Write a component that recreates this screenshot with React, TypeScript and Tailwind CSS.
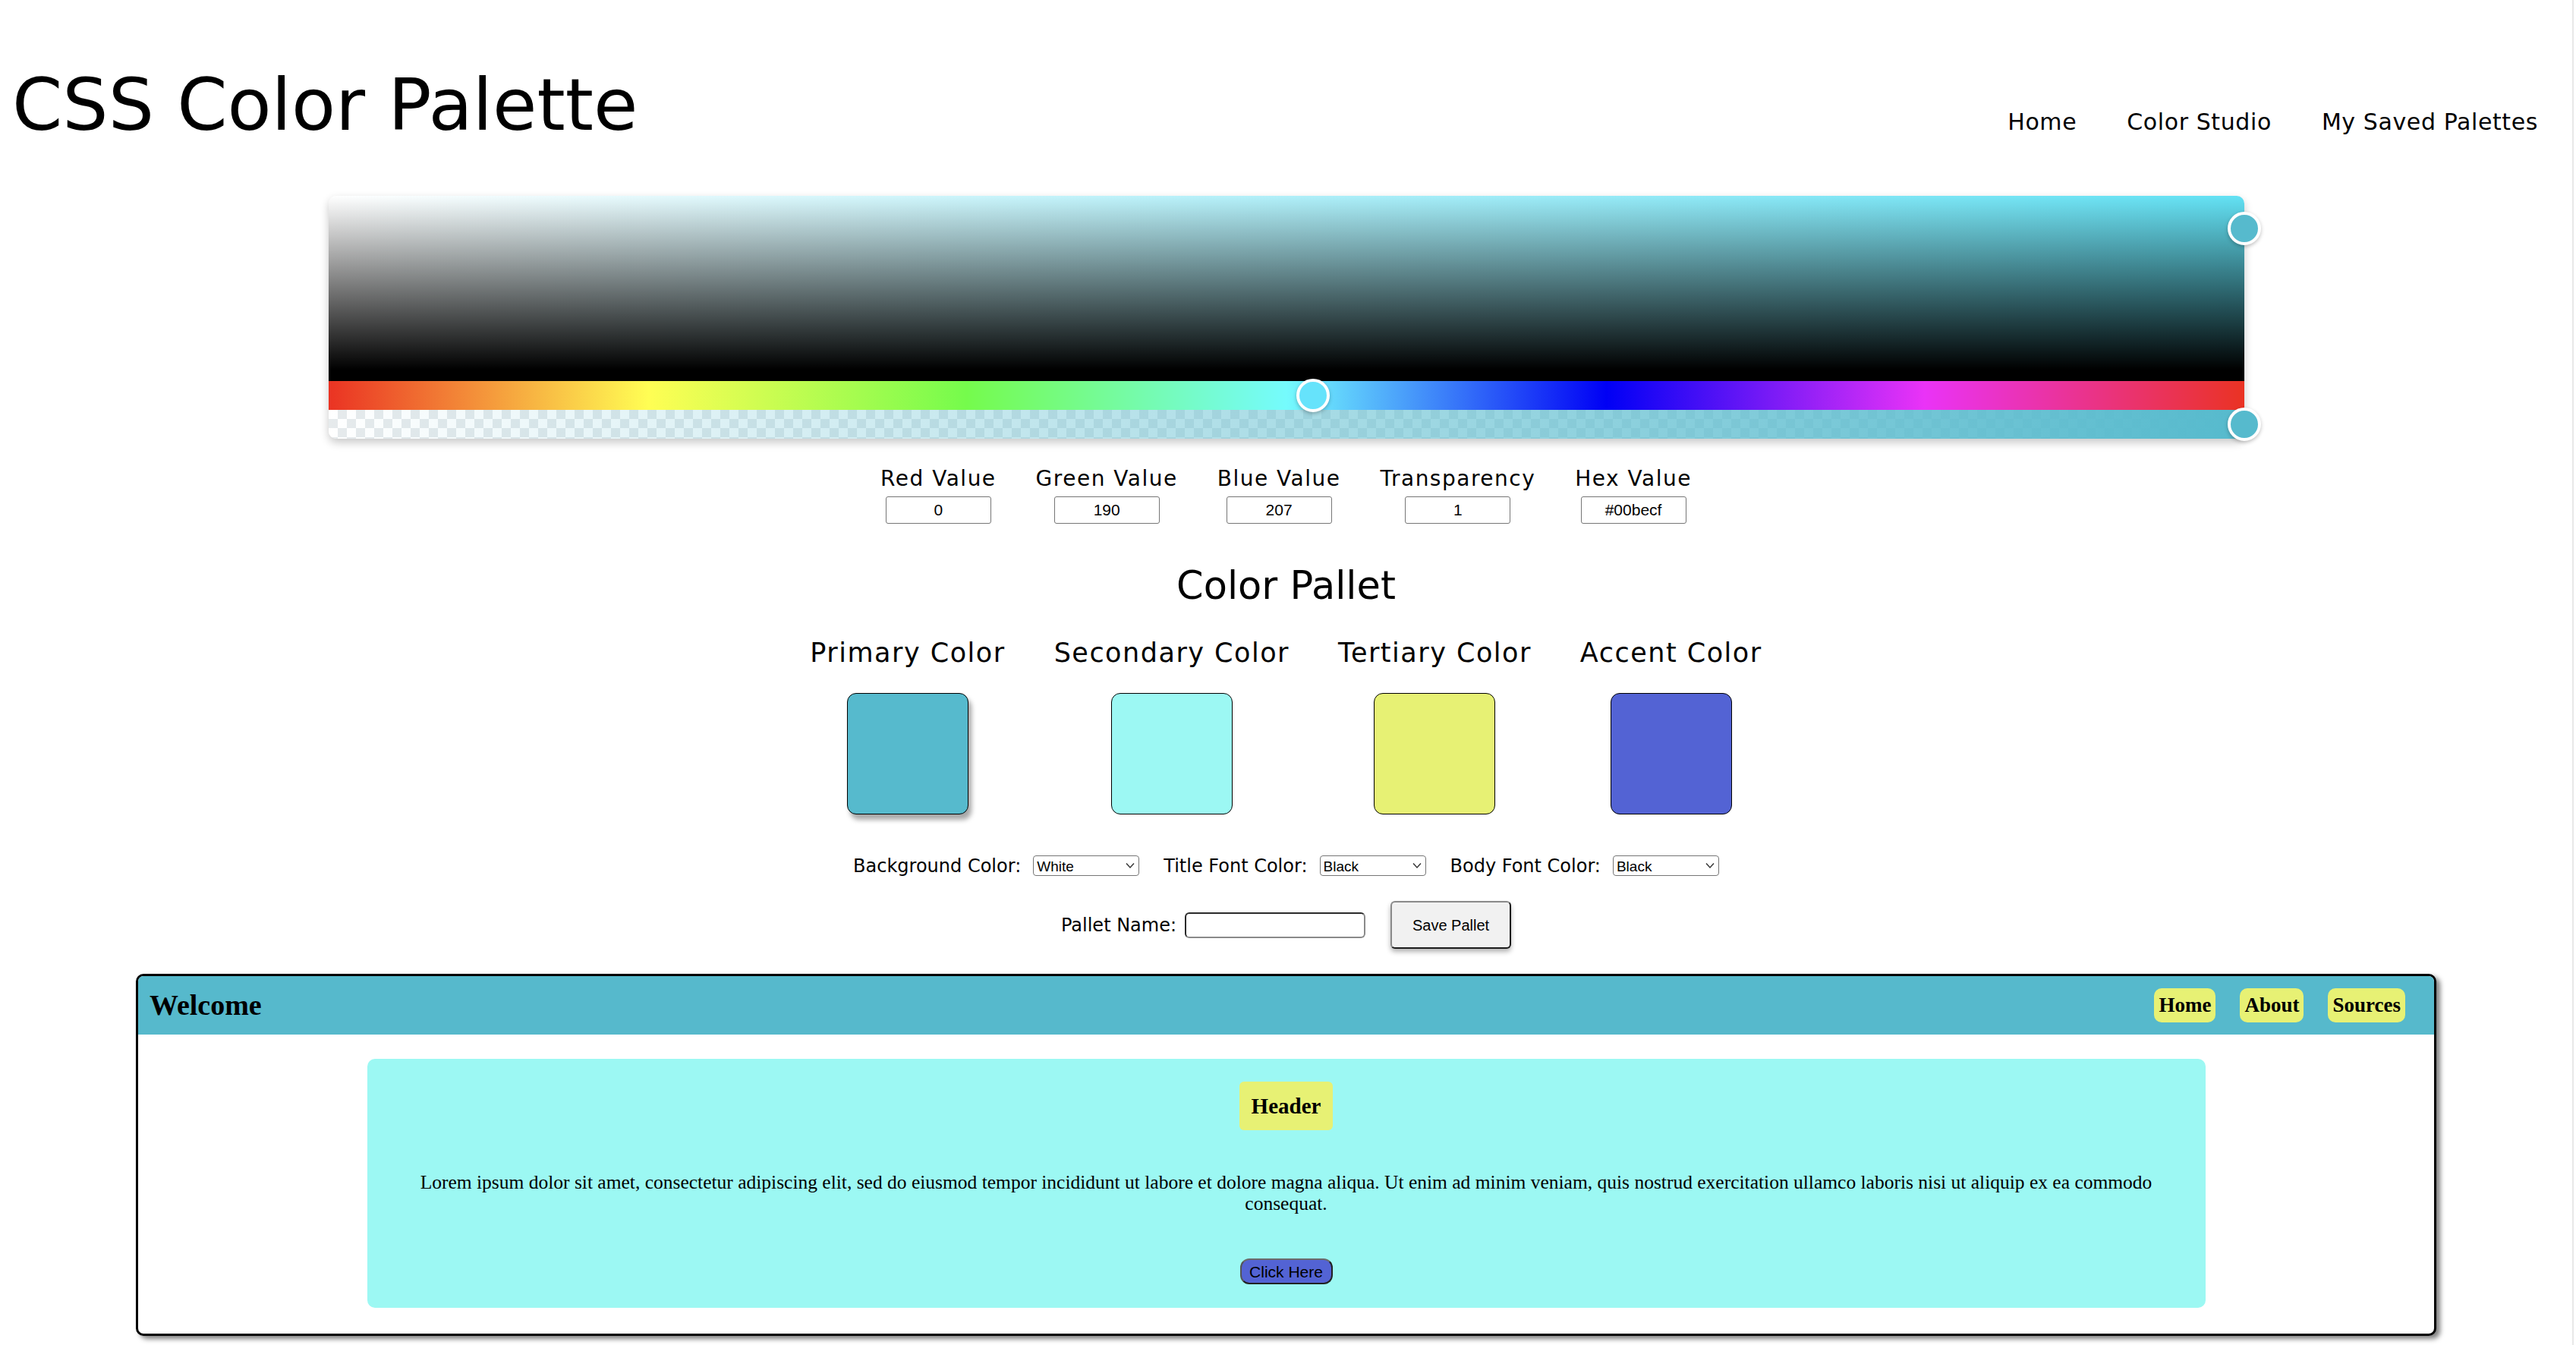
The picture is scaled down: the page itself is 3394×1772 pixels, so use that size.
import React from "react";

const sans = "font-['DejaVu_Sans',sans-serif]";
const arial = "font-['Liberation_Sans',Arial,sans-serif]";
const serif = "font-['Liberation_Serif','Times_New_Roman',serif]";

const values = [
  { label: "Red Value", value: "0" },
  { label: "Green Value", value: "190" },
  { label: "Blue Value", value: "207" },
  { label: "Transparency", value: "1" },
  { label: "Hex Value", value: "#00becf" },
];

const swatches = [
  { name: "Primary Color", cls: "bg-[#56bacd] shadow-[4px_7px_6px_rgba(0,0,0,0.35)]" },
  { name: "Secondary Color", cls: "bg-[#9cf8f3]" },
  { name: "Tertiary Color", cls: "bg-[#e7f174]" },
  { name: "Accent Color", cls: "bg-[#5363d4]" },
];

const fontSelects = [
  { label: "Background Color:", value: "White" },
  { label: "Title Font Color:", value: "Black" },
  { label: "Body Font Color:", value: "Black" },
];

function Thumb({ className }: { className: string }) {
  return (
    <div
      className={`absolute h-[44px] w-[44px] rounded-full border-[4px] border-white shadow-[0_2px_5px_rgba(0,0,0,0.25)] ${className}`}
    />
  );
}

function ColorPicker() {
  return (
    <div className="relative mx-auto mt-[72px] w-[2524px] rounded-[10px] shadow-[0_5px_12px_rgba(0,0,0,0.22)]">
      <div className="h-[244px] rounded-t-[10px] bg-[linear-gradient(to_top,#000000_6%,rgba(0,0,0,0)),linear-gradient(to_right,#ffffff,#62e1f4)]" />
      <div className="h-[38px] bg-[linear-gradient(to_right,#ea3323_0%,#fffe54_16.7%,#75fb4c_33.3%,#75fbfd_50%,#0000f5_66.7%,#ea33f7_83.3%,#ea3323_100%)]" />
      <div className="h-[38px] overflow-hidden rounded-b-[10px] bg-[conic-gradient(#e6eaec_25%,#ffffff_0_50%,#e6eaec_0_75%,#ffffff_0)] [background-size:24px_24px]">
        <div className="h-full w-full bg-[linear-gradient(to_right,rgba(86,186,205,0),#56bacd)]" />
      </div>
      <Thumb className="left-[2502px] top-[21px] bg-[#56bacd]" />
      <Thumb className="left-[1275px] top-[241px] bg-[#66e3fb]" />
      <Thumb className="left-[2502px] top-[279px] bg-[#56bacd]" />
    </div>
  );
}

function Chevron() {
  return (
    <svg
      className="pointer-events-none absolute right-[6px] top-[9px]"
      width="12"
      height="9"
      viewBox="0 0 12 9"
      fill="none"
    >
      <path d="M1 1.5 L6 7 L11 1.5" stroke="#333" strokeWidth="1.4" />
    </svg>
  );
}

export default function App() {
  return (
    <div className="min-h-screen bg-white text-black">
      <div className="mr-[3px] min-h-screen border-r-2 border-[#e8e8e8] pb-[12px]">
        {/* top bar */}
        <header className="flex items-baseline justify-between pl-[16px] pr-[45px] pt-[91px]">
          <h1 className={`${sans} text-[95px] font-normal leading-none`}>
            CSS Color Palette
          </h1>
          <nav className={`${sans} flex gap-[66px] text-[30px] tracking-[0.6px]`}>
            <a>Home</a>
            <a>Color Studio</a>
            <a>My Saved Palettes</a>
          </nav>
        </header>

        <ColorPicker />

        {/* rgb inputs */}
        <div className="mt-[39px] flex justify-center gap-[52px]">
          {values.map((v) => (
            <div key={v.label} className="flex flex-col items-center">
              <span className={`${sans} text-[28px] leading-none tracking-[1.5px]`}>
                {v.label}
              </span>
              <input
                readOnly
                value={v.value}
                className={`${arial} mt-[9px] h-[36px] w-[139px] rounded-[3px] border border-[#767676] text-center text-[21px] text-black`}
              />
            </div>
          ))}
        </div>

        <h2 className={`${sans} mt-[56px] text-center text-[51px] font-normal leading-none`}>
          Color Pallet
        </h2>

        <div className="mt-[46px] flex justify-center gap-[64px]">
          {swatches.map((s) => (
            <div key={s.name} className="flex flex-col items-center">
              <span className={`${sans} text-[35px] leading-none tracking-[1.5px]`}>
                {s.name}
              </span>
              <div
                className={`mt-[35px] h-[160px] w-[160px] rounded-[12px] border border-black ${s.cls}`}
              />
            </div>
          ))}
        </div>

        {/* font selects */}
        <div className="mt-[54px] flex items-center justify-center gap-[32px]">
          {fontSelects.map((f) => (
            <div key={f.label} className="flex items-center gap-[16px]">
              <span className={`${sans} text-[24px] leading-none`}>{f.label}</span>
              <div className="relative">
                <select
                  defaultValue={f.value}
                  className={`${arial} h-[27px] w-[140px] appearance-none rounded-[4px] border border-[#767676] bg-white pl-[4px] text-[19px] text-black`}
                >
                  <option>White</option>
                  <option>Black</option>
                </select>
                <Chevron />
              </div>
            </div>
          ))}
        </div>

        <div className="mt-[33px] flex items-center justify-center">
          <span className={`${sans} text-[24px] leading-none`}>Pallet Name:</span>
          <input
            className="ml-[11px] h-[34px] w-[238px] rounded-[6px] border-2 border-b-[#8a8a8a] border-l-[#2a2a2a] border-r-[#8a8a8a] border-t-[#2a2a2a] bg-white"
          />
          <button
            className={`${arial} ml-[33px] h-[63px] w-[159px] rounded-[6px] border-2 border-b-[#1c1c1c] border-l-[#8a8a8a] border-r-[#1c1c1c] border-t-[#8a8a8a] bg-[#f1f1f1] text-[20px] text-black shadow-[0_4px_6px_rgba(0,0,0,0.3)]`}
          >
            Save Pallet
          </button>
        </div>

        {/* preview */}
        <div className="mx-auto mt-[33px] w-[3031px] overflow-hidden rounded-[10px] border-[3px] border-black bg-white shadow-[5px_4px_6px_rgba(0,0,0,0.5)]">
          <div className="flex h-[77px] items-center justify-between bg-[#56b9cc] pl-[15px] pr-[38px]">
            <h1 className={`${serif} text-[38px] font-bold`}>Welcome</h1>
            <div className="flex gap-[32px]">
              {["Home", "About", "Sources"].map((n) => (
                <span
                  key={n}
                  className={`${serif} flex h-[45px] items-center rounded-[10px] bg-[#e7f174] px-[6px] text-[27px] font-bold`}
                >
                  {n}
                </span>
              ))}
            </div>
          </div>
          <div className="mx-auto mb-[34px] mt-[32px] flex w-[2422px] flex-col items-center rounded-[10px] bg-[#9cf8f3] px-[32px] pb-[31px] pt-[30px]">
            <h2
              className={`${serif} rounded-[6px] bg-[#e7f174] px-[16px] py-[16px] text-[29px] font-bold leading-[32px]`}
            >
              Header
            </h2>
            <p className={`${serif} mt-[55px] text-center text-[25.5px] leading-[28px]`}>
              Lorem ipsum dolor sit amet, consectetur adipiscing elit, sed do eiusmod tempor
              incididunt ut labore et dolore magna aliqua. Ut enim ad minim veniam, quis nostrud
              exercitation ullamco laboris nisi ut aliquip ex ea commodo consequat.
            </p>
            <button
              className={`${arial} mt-[58px] h-[34px] w-[122px] rounded-[12px] border-2 border-b-[#222] border-l-[#555] border-r-[#222] border-t-[#6b6b6b] bg-[#5363d4] text-[21px] leading-none text-black`}
            >
              Click Here
            </button>
          </div>
        </div>
      </div>
    </div>
  );
}
